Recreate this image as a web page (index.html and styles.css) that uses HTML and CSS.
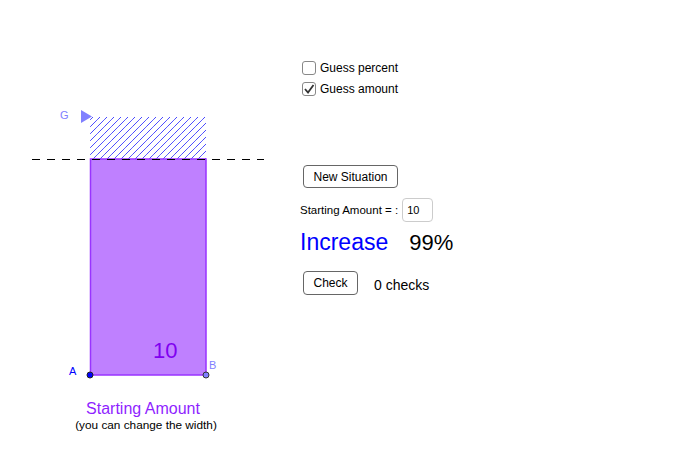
FILE: index.html
```html
<!DOCTYPE html>
<html lang="en">
<head>
    <meta charset="UTF-8">
    <title>Percent Increase</title>
    <link rel="stylesheet" href="styles.css">
</head>
<body>
    <div class="applet">
        <svg class="diagram" width="300" height="450" viewBox="0 0 300 450">
            <defs>
                <pattern id="hatch" patternUnits="userSpaceOnUse" width="7" height="7">
                    <path d="M-1 8 L8 -1" stroke="#0000ff" stroke-width="1" stroke-dasharray="1 0.5"/>
                </pattern>
            </defs>
            <rect x="90" y="117" width="116" height="42" fill="url(#hatch)"/>
            <rect x="90.5" y="159" width="115.5" height="216" fill="#bf80ff" stroke="#9933ff" stroke-width="1.5"/>
            <line x1="32" y1="159.5" x2="264" y2="159.5" stroke="#000" stroke-width="1" stroke-dasharray="8 7"/>
            <polygon points="81,110 81,123 92,116.5" fill="#8080ff"/>
            <text x="60" y="119" class="lbl-g">G</text>
            <text x="153" y="358" class="value">10</text>
            <circle cx="90" cy="375" r="3" fill="#0000ff" stroke="#222" stroke-width="1"/>
            <circle cx="206" cy="375" r="3" fill="#8080ff" stroke="#333" stroke-width="1"/>
            <text x="69" y="375" class="lbl-a">A</text>
            <text x="209" y="369" class="lbl-b">B</text>
            <text x="143" y="414" class="caption">Starting Amount</text>
            <text x="146" y="429" class="hint">(you can change the width)</text>
        </svg>

        <div class="panel">
            <label class="check-row">
                <span class="box"></span>
                Guess percent
            </label>
            <label class="check-row">
                <span class="box">
                    <svg width="12" height="12" viewBox="0 0 12 12"><path d="M2 6 L5 9.5 L10.5 2" fill="none" stroke="#333" stroke-width="1.8"/></svg>
                </span>
                Guess amount
            </label>

            <button class="btn new-btn">New Situation</button>

            <div class="amount-row">
                <span>Starting Amount = :</span>
                <span class="field">10</span>
            </div>

            <div class="result">
                <span class="word">Increase</span>
                <span class="pct">99%</span>
            </div>

            <div class="check-line">
                <button class="btn check-btn">Check</button>
                <span class="count">0 checks</span>
            </div>
        </div>
    </div>
</body>
</html>
```

FILE: styles.css
```css
body { margin: 0; background: #fff; font-family: "Liberation Sans", Arial, sans-serif; color: #000; }
.applet { width: 686px; height: 450px; display: flex; overflow: hidden; }
.diagram { display: block; flex: none; }
.diagram text { font-family: "Liberation Sans", Arial, sans-serif; }
.lbl-g { font-size: 11px; fill: #8080ff; }
.lbl-a { font-size: 11px; fill: #0000ff; }
.lbl-b { font-size: 11px; fill: #8080ff; }
.value { font-size: 22px; fill: #8000f0; }
.caption { font-size: 16px; fill: #8f1fff; text-anchor: middle; }
.hint { font-size: 11.8px; fill: #000; text-anchor: middle; }

.panel { display: flex; flex-direction: column; align-items: flex-start; padding-top: 60px; }
.check-row { display: flex; align-items: center; gap: 4px; font-size: 12px; height: 15px; margin-left: 2px; margin-bottom: 6px; }
.box { width: 12px; height: 12px; border: 1.5px solid #888; border-radius: 3px; display: flex; align-items: center; justify-content: center; }
.btn { font-family: "Liberation Sans", Arial, sans-serif; font-size: 12px; background: #fff; border: 1.5px solid #666; border-radius: 4px; color: #000; padding: 0; }
.new-btn { width: 95px; height: 23px; margin-left: 3px; margin-top: 63px; }
.amount-row { display: flex; align-items: center; gap: 4px; font-size: 11.5px; margin-top: 10px; }
.field { width: 25px; height: 22px; border: 1px solid #ccc; border-radius: 4px; padding-left: 4px; display: flex; align-items: center; font-size: 11px; }
.result { display: flex; align-items: baseline; gap: 21px; font-size: 23px; margin-top: 7px; height: 30px; }
.word { color: #0000ff; }
.pct { font-size: 22px; }
.check-line { display: flex; align-items: center; gap: 16px; margin-top: 12px; margin-left: 3px; }
.check-btn { width: 55px; height: 24px; }
.count { font-size: 14px; padding-top: 3px; }
```
